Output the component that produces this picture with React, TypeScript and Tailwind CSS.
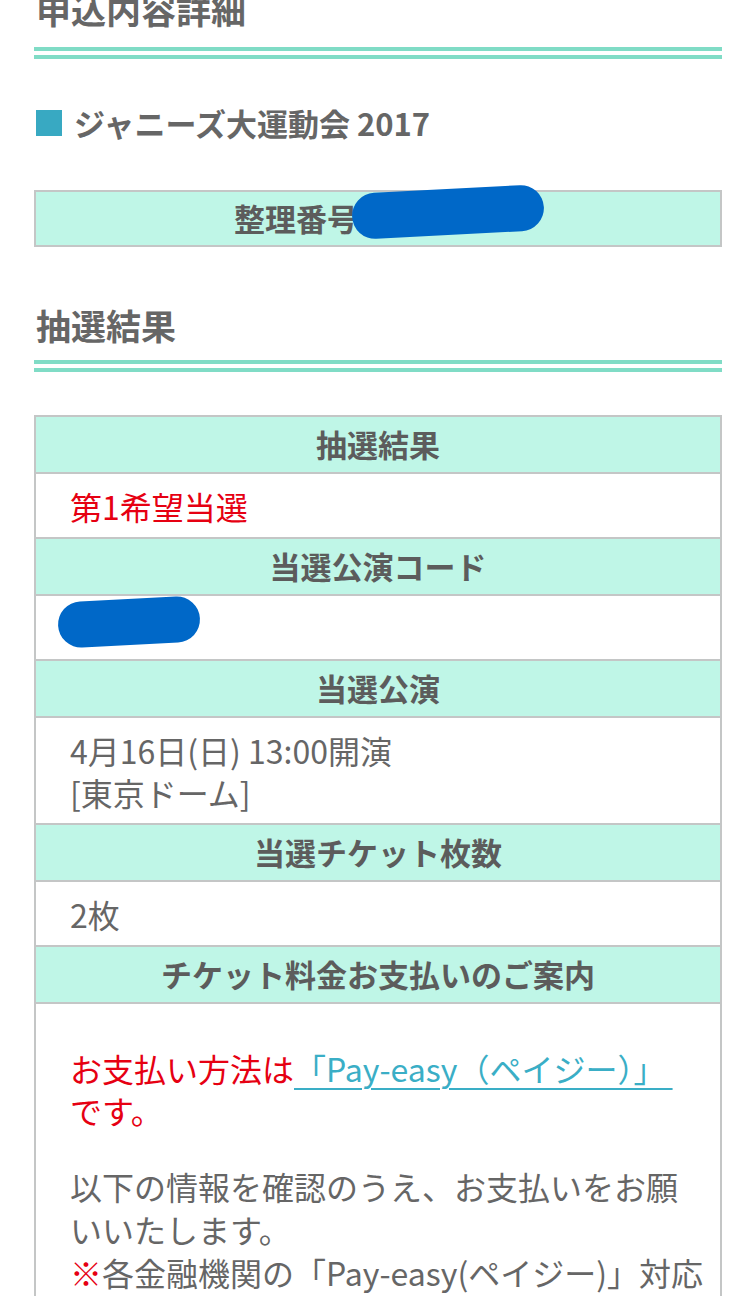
import type { ReactNode } from "react";

function DoubleRule() {
  return <div className="h-3 border-y-4 border-[#80dcc6]" />;
}

function Blob({ className }: { className: string }) {
  return (
    <div
      className={`absolute bg-[#0068c8] rounded-full -rotate-[3deg] ${className}`}
    />
  );
}

function HeadRow({ children }: { children: ReactNode }) {
  return (
    <div className="h-[57px] flex items-center justify-center bg-[#bff6e7] text-[31px] font-bold text-[#5c5c5c] border-b-2 border-[#c4c6c6]">
      {children}
    </div>
  );
}

function DataRow({ children, className = "" }: { children: ReactNode; className?: string }) {
  return (
    <div
      className={`relative pl-[34px] pr-[15px] pt-[11px] pb-[10px] text-[32px] leading-[42px] text-[#666] border-b-2 border-[#c4c6c6] ${className}`}
    >
      {children}
    </div>
  );
}

export default function App() {
  return (
    <div className="min-h-screen bg-white px-[34px] font-['Noto_Sans_CJK_JP',sans-serif] overflow-hidden">
      <h2 className="-mt-[15px] text-[35px] leading-[48px] font-bold text-[#666] px-[2px]">
        申込内容詳細
      </h2>
      <div className="mt-[14px]">
        <DoubleRule />
      </div>

      <div className="mt-[44px] flex items-center gap-[12px] px-[2px] text-[31px] leading-[40px] font-bold text-[#666]">
        <span className="w-[26px] h-[26px] bg-[#38a9c2]" />
        <span>ジャニーズ大運動会 2017</span>
      </div>

      <div className="relative mt-[47px] h-[57px] border-2 border-[#c4c6c6] bg-[#bff6e7] flex items-center justify-center text-[31px] font-bold text-[#5c5c5c]">
        <span className="pr-[164px]">整理番号</span>
        <Blob className="left-[316px] top-[-3px] w-[192px] h-[46px]" />
      </div>

      <h2 className="mt-[54px] text-[35px] leading-[48px] font-bold text-[#666] px-[2px]">
        抽選結果
      </h2>
      <div className="mt-[11px]">
        <DoubleRule />
      </div>

      <div className="mt-[43px] border-x-2 border-t-2 border-[#c4c6c6]">
        <HeadRow>抽選結果</HeadRow>
        <DataRow>
          <span className="text-[#e60012]">第1希望当選</span>
        </DataRow>
        <HeadRow>当選公演コード</HeadRow>
        <DataRow>
          &nbsp;
          <Blob className="left-[22px] top-[3px] w-[142px] h-[46px]" />
        </DataRow>
        <HeadRow>当選公演</HeadRow>
        <DataRow>
          <p>4月16日(日) 13:00開演</p>
          <p>[東京ドーム]</p>
        </DataRow>
        <HeadRow>当選チケット枚数</HeadRow>
        <DataRow>2枚</DataRow>
        <HeadRow>チケット料金お支払いのご案内</HeadRow>
        <DataRow className="pt-[43px]">
          <p className="text-[#e60012]">
            お支払い方法は
            <a href="#" className="text-[#3aaec6] underline underline-offset-[6px] decoration-2">
              「Pay-easy（ペイジー）」&nbsp;
            </a>
            <br />
            です。
          </p>
          <p className="mt-[34px] leading-[43px]">
            以下の情報を確認のうえ、お支払いをお願いいたします。
            <br />
            <span className="text-[#e60012]">※</span>
            各金融機関の「Pay-easy(ペイジー)」対応ATMまたはネットバンキングにてお支払いください。
          </p>
        </DataRow>
      </div>
    </div>
  );
}
